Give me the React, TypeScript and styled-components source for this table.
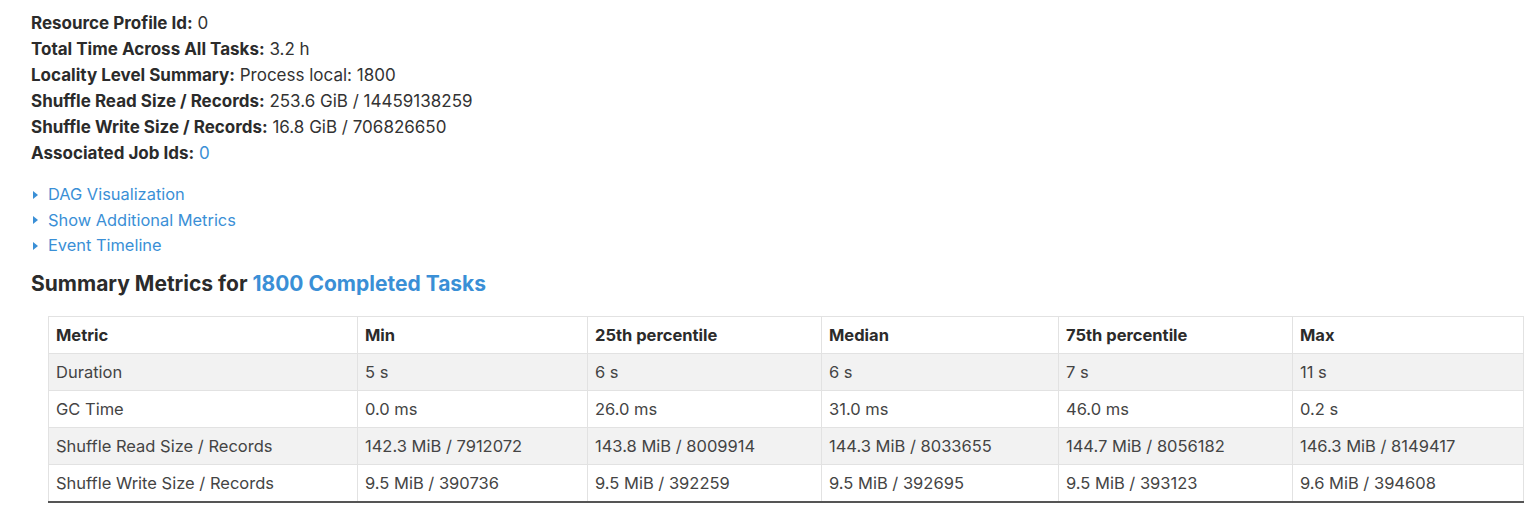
import styled, { createGlobalStyle } from "styled-components";

const GlobalStyle = createGlobalStyle`
  body {
    margin: 0;
    background: #fff;
    font-family: Inter, "Liberation Sans", Arial, sans-serif;
    color: #333;
  }
`;

type Info = { label: string; value: string; link?: boolean };

const info: Info[] = [
  { label: "Resource Profile Id:", value: "0" },
  { label: "Total Time Across All Tasks:", value: "3.2 h" },
  { label: "Locality Level Summary:", value: "Process local: 1800" },
  { label: "Shuffle Read Size / Records:", value: "253.6 GiB / 14459138259" },
  { label: "Shuffle Write Size / Records:", value: "16.8 GiB / 706826650" },
  { label: "Associated Job Ids:", value: "0", link: true },
];

const toggles = ["DAG Visualization", "Show Additional Metrics", "Event Timeline"];

const columns = ["Metric", "Min", "25th percentile", "Median", "75th percentile", "Max"];
const widths = [309, 230, 234, 237, 234, 231];

const rows: string[][] = [
  ["Duration", "5 s", "6 s", "6 s", "7 s", "11 s"],
  ["GC Time", "0.0 ms", "26.0 ms", "31.0 ms", "46.0 ms", "0.2 s"],
  [
    "Shuffle Read Size / Records",
    "142.3 MiB / 7912072",
    "143.8 MiB / 8009914",
    "144.3 MiB / 8033655",
    "144.7 MiB / 8056182",
    "146.3 MiB / 8149417",
  ],
  [
    "Shuffle Write Size / Records",
    "9.5 MiB / 390736",
    "9.5 MiB / 392259",
    "9.5 MiB / 392695",
    "9.5 MiB / 393123",
    "9.6 MiB / 394608",
  ],
];

export default function App() {
  return (
    <>
      <GlobalStyle />
      <Page>
        <InfoList>
          {info.map((item) => (
            <InfoItem key={item.label}>
              <strong>{item.label}</strong>{" "}
              {item.link ? <Link href="#">{item.value}</Link> : item.value}
            </InfoItem>
          ))}
        </InfoList>

        <Toggles>
          {toggles.map((t) => (
            <Toggle key={t}>
              <Arrow />
              <Link href="#">{t}</Link>
            </Toggle>
          ))}
        </Toggles>

        <Heading>
          Summary Metrics for <Link href="#">1800 Completed Tasks</Link>
        </Heading>

        <Table>
          <colgroup>
            {widths.map((w, i) => (
              <col key={i} style={{ width: w }} />
            ))}
          </colgroup>
          <thead>
            <tr>
              {columns.map((c) => (
                <Th key={c}>{c}</Th>
              ))}
            </tr>
          </thead>
          <tbody>
            {rows.map((r, i) => (
              <Row key={r[0]} $striped={i % 2 === 0}>
                {r.map((cell, j) => (
                  <Td key={j}>{cell}</Td>
                ))}
              </Row>
            ))}
          </tbody>
        </Table>
      </Page>
    </>
  );
}

const Page = styled.div`
  padding: 10px 0 0 31px;
`;

const InfoList = styled.ul`
  list-style: none;
  margin: 0;
  padding: 0;
`;

const InfoItem = styled.li`
  font-size: 17px;
  line-height: 26px;
  color: #333;

  strong {
    font-weight: 700;
    color: #2b2b2b;
  }
`;

const Link = styled.a`
  color: #3a8fd6;
  text-decoration: none;
`;

const Toggles = styled.div`
  margin-top: 16px;
  display: flex;
  flex-direction: column;
`;

const Toggle = styled.div`
  display: flex;
  align-items: center;
  gap: 10px;
  font-size: 16.4px;
  line-height: 25.5px;
`;

const Arrow = styled.span`
  width: 0;
  height: 0;
  margin-left: 2px;
  border-top: 4.5px solid transparent;
  border-bottom: 4.5px solid transparent;
  border-left: 5px solid #3a8fd6;
`;

const Heading = styled.h4`
  margin: 11px 0 0;
  font-size: 21px;
  line-height: 28px;
  font-weight: 700;
  color: #2b2b2b;
`;

const Table = styled.table`
  margin: 18px 0 0 17px;
  width: 1475px;
  border-collapse: collapse;
  table-layout: fixed;
  border: 1px solid #e2e2e2;
  border-bottom: 2px solid #555;
  font-size: 16.5px;
`;

const Th = styled.th`
  height: 36px;
  padding: 0 7px;
  text-align: left;
  font-weight: 700;
  color: #2b2b2b;
  border: 1px solid #e2e2e2;
  border-top: none;
  background: #fff;
`;

const Row = styled.tr<{ $striped: boolean }>`
  background: ${({ $striped }) => ($striped ? "#f2f2f2" : "#fff")};
`;

const Td = styled.td`
  height: 36px;
  padding: 0 7px;
  color: #444;
  border: 1px solid #e2e2e2;
  border-bottom: none;
`;
